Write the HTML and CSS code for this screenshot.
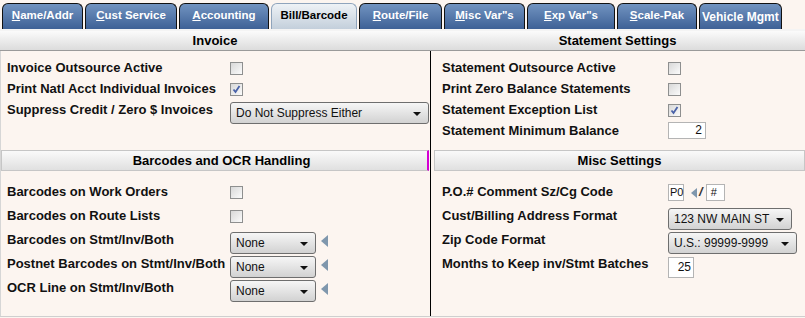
FILE: index.html
```html
<!DOCTYPE html>
<html lang="en">
<head>
    <meta charset="UTF-8">
    <title>Bill/Barcode</title>
    <link rel="stylesheet" href="styles.css">
</head>
<body>
    <div class="tabs">
        <div class="tab w1"><u>N</u>ame/Addr</div>
        <div class="tab w2"><u>C</u>ust Service</div>
        <div class="tab w3"><u>A</u>ccounting</div>
        <div class="tab w4 active">Bill/Barcode</div>
        <div class="tab w5"><u>R</u>oute/File</div>
        <div class="tab w6"><u>M</u>isc Var"s</div>
        <div class="tab w7"><u>E</u>xp Var"s</div>
        <div class="tab w8"><u>S</u>cale-Pak</div>
        <div class="tab w9 big">Vehicle Mgmt</div>
    </div>

    <div class="head-row">
        <div class="section-head">Invoice</div>
        <div class="section-head">Statement Settings</div>
    </div>

    <div class="columns">
        <!-- left column -->
        <div class="col left">
            <div class="block top">
                <div class="row">
                    <span class="label">Invoice Outsource Active</span>
                    <span class="check"></span>
                </div>
                <div class="row">
                    <span class="label">Print Natl Acct Individual Invoices</span>
                    <span class="check on"><svg width="11" height="11" viewBox="0 0 11 11"><path d="M2.5 5.5 L4.5 8 L8.5 2" fill="none" stroke="#4a62a8" stroke-width="1.8"/></svg></span>
                </div>
                <div class="row">
                    <span class="label">Suppress Credit / Zero $ Invoices</span>
                    <div class="select s-wide">Do Not Suppress Either<span class="arrow"></span></div>
                </div>
            </div>
            <div class="sub-head left-head">Barcodes and OCR Handling</div>
            <div class="block bottom">
                <div class="row tall">
                    <span class="label">Barcodes on Work Orders</span>
                    <span class="check"></span>
                </div>
                <div class="row tall">
                    <span class="label">Barcodes on Route Lists</span>
                    <span class="check"></span>
                </div>
                <div class="row tall">
                    <span class="label">Barcodes on Stmt/Inv/Both</span>
                    <div class="select s-small">None<span class="arrow"></span></div>
                    <span class="marker"></span>
                </div>
                <div class="row tall">
                    <span class="label">Postnet Barcodes on Stmt/Inv/Both</span>
                    <div class="select s-small">None<span class="arrow"></span></div>
                    <span class="marker"></span>
                </div>
                <div class="row tall">
                    <span class="label">OCR Line on Stmt/Inv/Both</span>
                    <div class="select s-small">None<span class="arrow"></span></div>
                    <span class="marker"></span>
                </div>
            </div>
        </div>

        <!-- right column -->
        <div class="col right">
            <div class="block top">
                <div class="row">
                    <span class="label">Statement Outsource Active</span>
                    <span class="check"></span>
                </div>
                <div class="row">
                    <span class="label">Print Zero Balance Statements</span>
                    <span class="check"></span>
                </div>
                <div class="row">
                    <span class="label">Statement Exception List</span>
                    <span class="check on"><svg width="11" height="11" viewBox="0 0 11 11"><path d="M2.5 5.5 L4.5 8 L8.5 2" fill="none" stroke="#4a62a8" stroke-width="1.8"/></svg></span>
                </div>
                <div class="row">
                    <span class="label">Statement Minimum Balance</span>
                    <span class="box b-min">2</span>
                </div>
            </div>
            <div class="sub-head right-head">Misc Settings</div>
            <div class="block bottom">
                <div class="row tall">
                    <span class="label">P.O.# Comment Sz/Cg Code</span>
                    <span class="box b-po">P0</span>
                    <span class="marker small"></span>
                    <span class="slash">/</span>
                    <span class="box b-hash">#</span>
                </div>
                <div class="row tall">
                    <span class="label">Cust/Billing Address Format</span>
                    <div class="select s-addr">123 NW MAIN ST<span class="arrow"></span></div>
                </div>
                <div class="row tall">
                    <span class="label">Zip Code Format</span>
                    <div class="select s-zip">U.S.: 99999-9999<span class="arrow"></span></div>
                </div>
                <div class="row tall">
                    <span class="label">Months to Keep inv/Stmt Batches</span>
                    <span class="box b-months">25</span>
                </div>
            </div>
        </div>
    </div>
</body>
</html>
```

FILE: styles.css
```css
body {
    margin: 0;
    background-color: #fcf5f0;
    font-family: 'Liberation Sans', Arial, sans-serif;
    color: #000;
    height: 318px;
    overflow: hidden;
}

/* tab strip */
.tabs {
    display: flex;
    gap: 2px;
    padding: 3px 0 0 2px;
    height: 26px;
}

.tab {
    box-sizing: border-box;
    height: 26px;
    border: 1px solid #111;
    border-bottom: none;
    border-radius: 6px 6px 0 0;
    background: linear-gradient(#7193c0, #3e6196);
    color: #fff;
    font-size: 11.5px;
    font-weight: bold;
    text-align: center;
    line-height: 22px;
    white-space: nowrap;
}

.tab.active {
    background: linear-gradient(#eef2f6, #c3cfdb);
    border-color: #8fa4bc;
    color: #000;
}

.tab.big {
    font-size: 12px;
    line-height: 26px;
    text-align: left;
    padding-left: 2px;
}

.w1 { width: 81px; }
.w2 { width: 92px; }
.w3 { width: 90px; }
.w4 { width: 86px; }
.w5 { width: 83px; }
.w6 { width: 81px; }
.w7 { width: 88px; }
.w8 { width: 80px; }
.w9 { width: 83px; }

/* section headers */
.head-row {
    display: grid;
    grid-template-columns: 430px 1fr;
    border-top: 2px solid #f4f4f4;
}

.section-head {
    height: 19px;
    line-height: 19px;
    text-align: center;
    font-size: 13px;
    font-weight: bold;
    background: linear-gradient(#fbfbfb, #dcdcdc);
    border-bottom: 1px solid #9a9a9a;
}

.sub-head {
    box-sizing: border-box;
    height: 21px;
    line-height: 19px;
    text-align: center;
    font-size: 13px;
    font-weight: bold;
    background: linear-gradient(#fafafa, #e0e0e0);
    border: 1px solid #c6c6c6;
}

.left-head {
    margin-right: 1px;
    border-right: 2px solid #d400d4;
    padding-left: 14px;
}

.right-head {
    margin-left: 3px;
}

/* columns */
.columns {
    display: grid;
    grid-template-columns: 430px 1fr;
    height: 265px;
    border-bottom: 1px solid #cfcfcf;
}

.col.left {
    border-left: 1px solid #d6d6d6;
}

.col.right {
    border-left: 1px solid #000;
}

.block.top {
    height: 92px;
    padding-top: 7px;
}

.block.bottom {
    padding-top: 9px;
}

.col.left .block {
    padding-left: 6px;
}

.col.right .block {
    padding-left: 11px;
}

.row {
    display: flex;
    align-items: flex-start;
    height: 21px;
    box-sizing: border-box;
    padding-top: 2px;
}

.row.tall {
    height: 24px;
    padding-top: 4px;
}

.label {
    font-size: 13px;
    font-weight: bold;
    line-height: 16px;
    white-space: nowrap;
    color: #111;
}

.col.left .label { width: 223px; }
.col.right .label { width: 226px; }

/* controls */
.check {
    box-sizing: border-box;
    width: 13px;
    height: 13px;
    margin-top: 2px;
    border: 1px solid #8e8f8f;
    background: linear-gradient(135deg, #d8d8d8, #fbfbfb);
    display: flex;
    align-items: center;
    justify-content: center;
}

.check svg {
    display: block;
}

.select {
    position: relative;
    box-sizing: border-box;
    height: 22px;
    line-height: 21px;
    padding-left: 5px;
    font-size: 12px;
    color: #111;
    border: 1px solid #6e6e6e;
    border-radius: 3px;
    background: linear-gradient(#f6f6f6, #d2d2d2);
    white-space: nowrap;
}

.select .arrow {
    position: absolute;
    right: 7px;
    top: 9px;
    border-left: 4px solid transparent;
    border-right: 4px solid transparent;
    border-top: 4px solid #111;
}

.s-wide { width: 199px; }
.s-small { width: 86px; }
.s-addr { width: 124px; }
.s-zip { width: 129px; }

.marker {
    margin: 3px 0 0 5px;
    border-top: 6px solid transparent;
    border-bottom: 6px solid transparent;
    border-right: 7px solid #7f97ad;
}

.marker.small {
    margin: 4px 0 0 7px;
    border-top-width: 5px;
    border-bottom-width: 5px;
    border-right-width: 6px;
}

.slash {
    font-size: 13px;
    font-weight: bold;
    font-style: italic;
    line-height: 16px;
    margin: 0 3px 0 2px;
    color: #333;
}

.box {
    box-sizing: border-box;
    background: #fff;
    border: 1px solid #b4b4b4;
    font-size: 12px;
    color: #111;
}

.b-min {
    width: 38px;
    height: 17px;
    line-height: 15px;
    margin-top: -1px;
    text-align: right;
    padding-right: 3px;
}

.b-po {
    width: 16px;
    height: 17px;
    line-height: 15px;
    font-size: 11px;
    padding-left: 1px;
}

.b-hash {
    width: 19px;
    height: 17px;
    line-height: 15px;
    font-size: 11px;
    padding-left: 4px;
}

.b-months {
    width: 26px;
    height: 21px;
    line-height: 19px;
    margin-top: 1px;
    text-align: right;
    padding-right: 2px;
}
```
